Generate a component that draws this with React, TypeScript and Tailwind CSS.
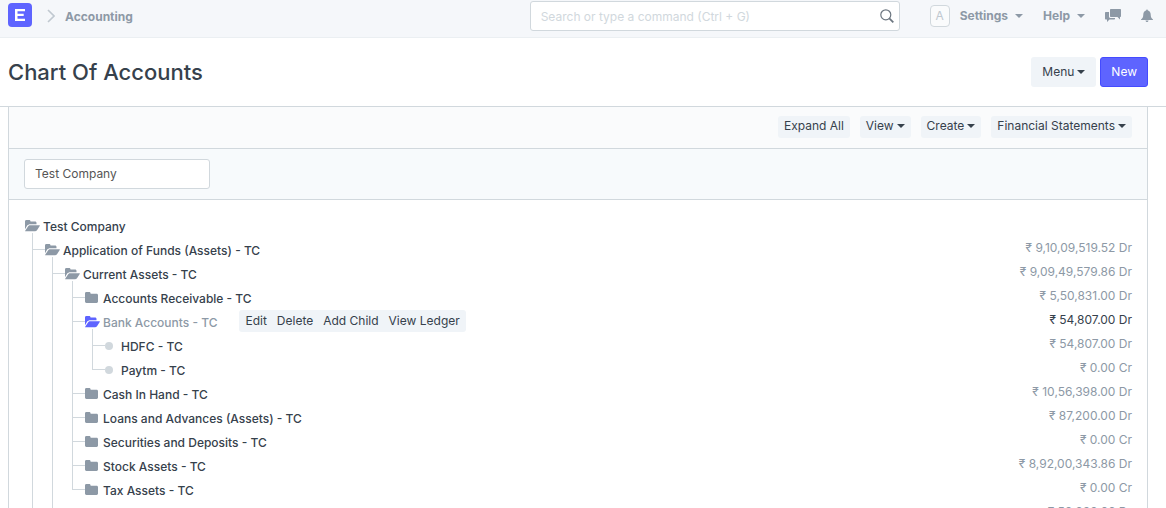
import React from 'react'

type Account = {
  name: string
  balance?: string
  open?: boolean
  selected?: boolean
  group?: boolean
  children?: Account[]
}

const accounts: Account = {
  name: 'Test Company',
  open: true,
  group: true,
  children: [
    {
      name: 'Application of Funds (Assets) - TC',
      balance: '9,10,09,519.52 Dr',
      open: true,
      group: true,
      children: [
        {
          name: 'Current Assets - TC',
          balance: '9,09,49,579.86 Dr',
          open: true,
          group: true,
          children: [
            { name: 'Accounts Receivable - TC', balance: '5,50,831.00 Dr', group: true },
            {
              name: 'Bank Accounts - TC',
              balance: '54,807.00 Dr',
              open: true,
              selected: true,
              group: true,
              children: [
                { name: 'HDFC - TC', balance: '54,807.00 Dr' },
                { name: 'Paytm - TC', balance: '0.00 Cr' }
              ]
            },
            { name: 'Cash In Hand - TC', balance: '10,56,398.00 Dr', group: true },
            { name: 'Loans and Advances (Assets) - TC', balance: '87,200.00 Dr', group: true },
            { name: 'Securities and Deposits - TC', balance: '0.00 Cr', group: true },
            { name: 'Stock Assets - TC', balance: '8,92,00,343.86 Dr', group: true },
            { name: 'Tax Assets - TC', balance: '0.00 Cr', group: true }
          ]
        },
        { name: 'Fixed Assets - TC', balance: '59,939.66 Dr', group: true }
      ]
    },
    { name: 'Source of Funds (Liabilities) - TC', group: true }
  ]
}

const nodeActions = ['Edit', 'Delete', 'Add Child', 'View Ledger']

const Caret = () => (
  <svg className="w-2 h-1 shrink-0" viewBox="0 0 8 4" fill="currentColor">
    <path d="M0 0h8L4 4z" />
  </svg>
)

const FolderOpenIcon = () => (
  <svg className="w-[15px] h-3 shrink-0" viewBox="0 0 15 12" fill="currentColor">
    <path d="M0 9.2V1.4C0 .6.6 0 1.4 0h2.800c.8 0 1.300.6 1.300 1.300v.3h4.600c.8 0 1.400.6 1.400 1.400v1.200H5c-1 0-2.100.6-2.800 1.400z" />
    <path d="M.3 11.3C0 11.3 0 11 .2 10.700L3 6.400C3.500 5.700 4.300 5.200 5.100 5.200h9.200c.6 0 .7.3.4.8L12 10.200c-.5.700-1.200 1.100-2 1.100z" />
  </svg>
)

const FolderIcon = () => (
  <svg className="w-[13px] h-3 shrink-0" viewBox="0 0 13 12" fill="currentColor">
    <path d="M0 1.400C0 .6.6 0 1.400 0h2.800c.8 0 1.400.6 1.400 1.400v.3h6c.8 0 1.400.6 1.400 1.400v6.500c0 .8-.6 1.400-1.400 1.400H1.400C.6 11 0 10.400 0 9.600z" />
  </svg>
)

const Connector = ({ last }: { last: boolean }) => (
  <div className="w-[13px] shrink-0 flex flex-col">
    <div className="h-3 border-l border-b border-[#d1d8dd]"></div>
    {!last && <div className="flex-1 border-l border-[#d1d8dd]"></div>}
  </div>
)

const TreeNode = ({ node }: { node: Account }) => (
  <div className="flex-1 min-w-0">
    <div className="h-6 flex items-start">
      <a
        href="#"
        className={`flex items-start font-medium ${node.selected ? 'text-[#8d99a6]' : 'text-[#36414c]'}`}
      >
        {node.group ? (
          <span
            className={`w-[18px] h-6 pt-1.5 flex flex-col ${node.selected ? 'text-[#5e64ff]' : 'text-[#8d99a6]'}`}
          >
            {node.open ? <FolderOpenIcon /> : <FolderIcon />}
            {node.children && <span className="flex-1 mt-px ml-[7px] border-l border-[#d1d8dd]"></span>}
          </span>
        ) : (
          <span className="w-2 h-2 mt-2 mr-2 rounded-full bg-[#d1d8dd]"></span>
        )}
        <span className="leading-[26px] whitespace-nowrap">{node.name}</span>
      </a>
      {node.selected && (
        <div className="h-[22px] ml-[22px] px-1.5 flex items-center gap-2.5 rounded-[3px] bg-[#f0f4f8] whitespace-nowrap">
          {nodeActions.map((action) => (
            <button key={action} type="button">
              {action}
            </button>
          ))}
        </div>
      )}
      {node.balance && (
        <span
          className={`ml-auto leading-5 whitespace-nowrap ${node.selected ? 'text-[#36414c]' : 'text-[#8d99a6]'}`}
        >
          ₹ {node.balance}
        </span>
      )}
    </div>
    {node.children && (
      <ul className="pl-[7px]">
        {node.children.map((child, index) => (
          <li key={child.name} className="flex">
            <Connector last={index === node.children!.length - 1} />
            <TreeNode node={child} />
          </li>
        ))}
      </ul>
    )}
  </div>
)

const Navbar = () => (
  <nav className="h-[38px] pl-2 pr-[13px] flex items-start bg-[#f5f7fa] border-b border-[#ebeff2] font-bold text-[#8d99a6]">
    <div className="h-8 flex items-center">
      <a
        href="#"
        aria-label="Home"
        className="w-6 h-6 -mt-0.5 flex items-center justify-center rounded-[4px] bg-[#5e64ff] text-white"
      >
        <svg className="w-6 h-6" viewBox="0 0 24 24" fill="currentColor">
          <path d="M7 6h10v2.200H9.500v2.600h6.200v2.200H9.500v2.800H17V18H7z" />
        </svg>
      </a>
      <svg className="w-2 h-3.5 ml-[15px] mr-2.5" viewBox="0 0 8 14" fill="none" stroke="#c0c8d0" strokeWidth="1.6">
        <path d="M1 1l6 6-6 6" />
      </svg>
      <a href="#" className="pt-0.5">Accounting</a>
    </div>
    <div className="ml-auto mt-px w-[370px] h-[30px] pl-2.5 pr-[5px] flex items-center rounded-[3px] border border-[#d1d8dd] bg-white">
      <input
        type="text"
        aria-label="Search"
        placeholder="Search or type a command (Ctrl + G)"
        className="flex-1 min-w-0 pt-px font-normal outline-none text-[#36414c] placeholder:text-[#d1d8dd]"
      />
      <svg className="w-3.5 h-3.5" viewBox="0 0 14 14" fill="none" stroke="#6c7680" strokeWidth="1.200">
        <circle cx="5.800" cy="5.800" r="5" />
        <path d="M9.300 9.300l4 4" strokeWidth="1.800" />
      </svg>
    </div>
    <div className="h-8 ml-[30px] flex items-center">
      <span className="w-5 h-[22px] flex items-center justify-center rounded-[4px] border border-[#d1d8dd] bg-[#fafbfc] font-normal text-[#c0c8d0]">
        A
      </span>
      <button type="button" className="ml-2.5 flex items-center gap-[7px]">
        Settings <Caret />
      </button>
      <button type="button" className="ml-5 flex items-center gap-[7px]">
        Help <Caret />
      </button>
      <button type="button" aria-label="Chat" className="ml-5">
        <svg className="w-4 h-3.5" viewBox="0 0 16 14" fill="currentColor">
          <path d="M6 0h9c.6 0 1 .4 1 1v6c0 .6-.4 1-1 1v2.500L12.500 8H6c-.6 0-1-.4-1-1V1c0-.6.4-1 1-1z" />
          <path d="M4 3H1c-.6 0-1 .4-1 1v5.500c0 .6.4 1 1 1h1V13l2.500-2.500H9c.6 0 1-.4 1-1V9H5.500C4.600 9 4 8.400 4 7.500z" />
        </svg>
      </button>
      <button type="button" aria-label="Notifications" className="ml-5">
        <svg className="w-3 h-3.5" viewBox="0 0 12 14" fill="currentColor">
          <path d="M6 .5c.6 0 .9.4.9.900 1.900.5 2.700 1.900 2.800 4.100.1 2.600.6 3.800 2.300 5V11H0v-.5c1.700-1.200 2.200-2.400 2.300-5 .1-2.200.9-3.600 2.800-4.100 0-.5.3-.9.9-.9z" />
          <path d="M4.500 11.500h3c0 .9-.7 1.500-1.500 1.500s-1.500-.6-1.500-1.500z" />
        </svg>
      </button>
    </div>
  </nav>
)

const toolButton = 'h-[22px] px-1.5 pb-0.5 flex items-center gap-[3px] rounded-[3px] bg-[#f0f4f8]'

const App = () => {
  return (
    <div className="h-screen overflow-hidden bg-white font-['Inter',sans-serif] text-[12px] text-[#36414c]">
      <Navbar />

      {/* Page head */}
      <header className="py-[19px] pl-2 pr-[18px] flex items-center gap-1 border-b border-[#d1d8dd]">
        <h1 className="mr-auto text-[22px] leading-[30px] font-medium">Chart Of Accounts</h1>
        <button type="button" className="h-[30px] px-[11px] flex items-center gap-[3px] rounded-[3px] bg-[#f0f4f8]">
          Menu <Caret />
        </button>
        <button
          type="button"
          className="h-[30px] px-2.5 rounded-[3px] border border-[#444bff] bg-[#5e64ff] text-white"
        >
          New
        </button>
      </header>

      <main className="ml-2 mr-[18px] border-x border-[#d1d8dd]">
        {/* Toolbar */}
        <div className="h-[42px] pb-px px-[15px] flex items-center justify-end gap-2.5 border-b border-[#d1d8dd] bg-[#fafbfc]">
          <button type="button" className={toolButton}>
            Expand All
          </button>
          <button type="button" className={toolButton}>
            View <Caret />
          </button>
          <button type="button" className={toolButton}>
            Create <Caret />
          </button>
          <button type="button" className={toolButton}>
            Financial Statements <Caret />
          </button>
        </div>

        {/* Company filter */}
        <div className="px-[15px] py-2.5 flex border-b border-[#d1d8dd] bg-[#f7fafc]">
          <input
            type="text"
            aria-label="Company"
            defaultValue="Test Company"
            className="w-[186px] h-[30px] px-2.5 pb-0.5 rounded-[3px] border border-[#d1d8dd] bg-white text-[#555555] outline-none"
          />
        </div>

        {/* Accounts tree */}
        <div className="pt-3.5 pl-4 pr-[15px] flex">
          <TreeNode node={accounts} />
        </div>
      </main>
    </div>
  )
}

export default App
